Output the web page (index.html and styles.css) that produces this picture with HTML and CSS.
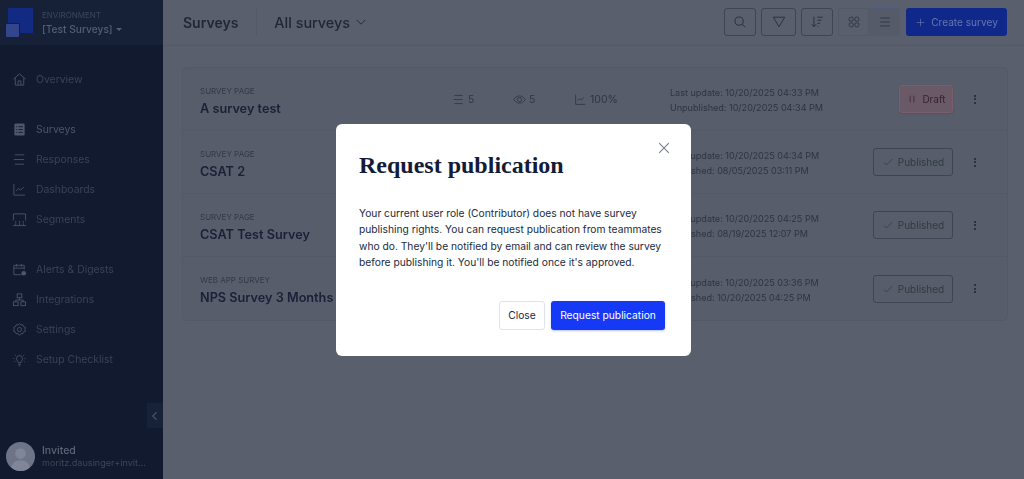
FILE: index.html
```html
<!DOCTYPE html>
<html lang="en">
<head>
  <meta charset="UTF-8">
  <title>Surveys</title>
  <link rel="stylesheet" href="styles.css">
</head>
<body>
  <aside class="sidebar">
    <div class="env">
      <div class="env-logo"><span class="logo-big"></span><span class="logo-small"></span></div>
      <div>
        <div class="env-label">ENVIRONMENT</div>
        <div class="env-name">[Test Surveys] <span class="caret"></span></div>
      </div>
    </div>
    <nav class="nav">
      <a class="nav-item nav-group">
        <svg viewBox="0 0 16 16"><path d="M1.500 7.500 8 2l6.500 5.500M3.500 6.500V14h9V6.500M6.500 14V9.500h3V14"/></svg>Overview
      </a>
      <a class="nav-item active">
        <svg viewBox="0 0 16 16"><rect class="solid" x="2.500" y="1.500" width="11" height="13" rx="1.500"/><path class="cut" d="M4.500 5h1M7 5h4.500M4.500 8h1M7 8h4.500M4.500 11h1M7 11h4.500"/></svg>Surveys
      </a>
      <a class="nav-item">
        <svg viewBox="0 0 16 16"><path d="M3 3h10M2 8h11M3 13h10"/></svg>Responses
      </a>
      <a class="nav-item">
        <svg viewBox="0 0 16 16"><path d="M2 2v12h12M4.500 9.500l2.500-2.500 2 1.500 3.500-3"/></svg>Dashboards
      </a>
      <a class="nav-item nav-group">
        <svg viewBox="0 0 16 16"><path d="M1.500 9V2h13v7M1 14.500h14"/><path class="thick" d="M3.500 10.500h1M7.500 10.500h1M11.500 10.500h1M3.500 13h1M7.500 13h1M11.500 13h1"/></svg>Segments
      </a>
      <a class="nav-item">
        <svg viewBox="0 0 16 16"><path d="M10 13.500H2V3.500h11V8M2 6.500h11M5 2v3M10 2v3"/><circle class="solid" cx="12.500" cy="12" r="2.500"/></svg>Alerts &amp; Digests
      </a>
      <a class="nav-item">
        <svg viewBox="0 0 16 16"><rect x="5.500" y="2" width="5" height="4"/><rect x="1.500" y="10.500" width="5" height="4"/><rect x="9.500" y="10.500" width="5" height="4"/><path d="M8 6v2.500M4 10.500v-2h8v2"/></svg>Integrations
      </a>
      <a class="nav-item">
        <svg viewBox="0 0 16 16"><path d="M8 1.800l1.500 1.400 2-.3.800 1.900 1.900.9-.4 2 .4 2.200-1.900.8-.8 1.900-2-.2L8 14.200l-1.500-1.800-2 .2-.8-1.900-1.900-.8.400-2.200-.4-2 1.900-.9.800-1.900 2 .3z"/><circle cx="8" cy="8" r="2.200"/></svg>Settings
      </a>
      <a class="nav-item">
        <svg viewBox="0 0 16 16"><path d="M6.500 11.500c0-1.800-1.700-2.300-1.700-4.500a3.200 3.200 0 0 1 6.400 0c0 2.200-1.700 2.700-1.700 4.500zM6.700 13.200h2.600M7.200 14.800h1.600M1.500 7h1.200M13.300 7h1.200M3 3l1 .8M13 3l-1 .8M2.500 10.500l1-.6M13.500 10.500l-1-.6"/></svg>Setup Checklist
      </a>
    </nav>
    <button type="button" class="collapse" aria-label="Collapse">
      <svg viewBox="0 0 16 16"><path d="M10 3 5 8l5 5"/></svg>
    </button>
    <div class="user">
      <div class="avatar">
        <svg viewBox="0 0 30 30"><circle cx="15" cy="12" r="5.500"/><path d="M5 30c0-8 4.500-11 10-11s10 3 10 11z"/></svg>
      </div>
      <div class="user-text">
        <div class="user-name">Invited</div>
        <div class="user-mail">moritz.dausinger+invit...</div>
      </div>
    </div>
  </aside>

  <main class="main">
    <header class="topbar">
      <div class="page-title">Surveys</div>
      <div class="topbar-sep"></div>
      <div class="page-filter">All surveys
        <svg viewBox="0 0 16 16"><path d="M3 5.500 8 10.500l5-5"/></svg>
      </div>
      <div class="tools">
        <button type="button" class="tool" aria-label="Search">
          <svg viewBox="0 0 16 16"><circle cx="7" cy="7" r="4.700"/><path d="m10.500 10.500 3.500 3.500"/></svg>
        </button>
        <button type="button" class="tool tool-filter" aria-label="Filter">
          <svg viewBox="0 0 16 16"><path d="M1.500 2.500h13L8 13.500z"/></svg>
        </button>
        <button type="button" class="tool" aria-label="Sort">
          <svg viewBox="0 0 16 16"><path d="M4.500 2v11M2 10.500 4.500 13.500 7 10.500M8.500 2.500h6M8.500 6h4.500M8.500 9.500h3M8.500 13h1"/></svg>
        </button>
        <div class="toggle">
          <button type="button" class="toggle-btn" aria-label="Grid">
            <svg viewBox="0 0 16 16"><rect x="2.500" y="2.500" width="4.500" height="4.500" rx="1.500"/><rect x="9" y="2.500" width="4.500" height="4.500" rx="1.500"/><rect x="2.500" y="9" width="4.500" height="4.500" rx="1.500"/><rect x="9" y="9" width="4.500" height="4.500" rx="1.500"/></svg>
          </button>
          <button type="button" class="toggle-btn on" aria-label="List">
            <svg viewBox="0 0 16 16"><path d="M2.500 3.500h11M2.500 8h11M2.500 12.500h11"/></svg>
          </button>
        </div>
        <button type="button" class="create">
          <svg viewBox="0 0 16 16"><path d="M8 2.500v11M2.500 8h11"/></svg>Create survey
        </button>
      </div>
    </header>

    <section class="list">
      <div class="row">
        <div class="row-title"><div class="kind">SURVEY PAGE</div><div class="name">A survey test</div></div>
        <div class="stat"><svg viewBox="0 0 16 16"><path d="M3 3h10M2 8h11M3 13h10"/></svg>5</div>
        <div class="stat"><svg viewBox="0 0 16 16"><path d="M1 8s2.500-4.500 7-4.500S15 8 15 8s-2.500 4.500-7 4.500S1 8 1 8z"/><circle cx="8" cy="8" r="2.500"/></svg>5</div>
        <div class="stat"><svg viewBox="0 0 16 16"><path d="M2 2v12h12M4.500 9.500l2.500-2.500 2 1.500 3.500-3"/></svg>100%</div>
        <div class="dates"><div>Last update: 10/20/2025 04:33 PM</div><div>Unpublished: 10/20/2025 04:34 PM</div></div>
        <div class="status draft"><svg viewBox="0 0 16 16"><path d="M5.500 3.500v9M10.500 3.500v9"/></svg>Draft</div>
        <div class="kebab"><span></span><span></span><span></span></div>
      </div>
      <div class="row">
        <div class="row-title"><div class="kind">SURVEY PAGE</div><div class="name">CSAT 2</div></div>
        <div class="stat"></div><div class="stat"></div><div class="stat"></div>
        <div class="dates"><div>Last update: 10/20/2025 04:34 PM</div><div>Published: 08/05/2025 03:11 PM</div></div>
        <div class="status"><svg viewBox="0 0 16 16"><path d="M2.500 8.500 6 12l7.500-8"/></svg>Published</div>
        <div class="kebab"><span></span><span></span><span></span></div>
      </div>
      <div class="row">
        <div class="row-title"><div class="kind">SURVEY PAGE</div><div class="name">CSAT Test Survey</div></div>
        <div class="stat"></div><div class="stat"></div><div class="stat"></div>
        <div class="dates"><div>Last update: 10/20/2025 04:25 PM</div><div>Published: 08/19/2025 12:07 PM</div></div>
        <div class="status"><svg viewBox="0 0 16 16"><path d="M2.500 8.500 6 12l7.500-8"/></svg>Published</div>
        <div class="kebab"><span></span><span></span><span></span></div>
      </div>
      <div class="row">
        <div class="row-title"><div class="kind">WEB APP SURVEY</div><div class="name">NPS Survey 3 Months</div></div>
        <div class="stat"></div><div class="stat"></div><div class="stat"></div>
        <div class="dates"><div>Last update: 10/20/2025 03:36 PM</div><div>Published: 10/20/2025 04:25 PM</div></div>
        <div class="status"><svg viewBox="0 0 16 16"><path d="M2.500 8.500 6 12l7.500-8"/></svg>Published</div>
        <div class="kebab"><span></span><span></span><span></span></div>
      </div>
    </section>
  </main>

  <div class="modal-wrap">
    <div class="modal" role="dialog" aria-labelledby="modal-title">
      <button type="button" class="modal-x" aria-label="Close">
        <svg viewBox="0 0 16 16"><path d="M2.500 2.500l11 11M13.500 2.500l-11 11"/></svg>
      </button>
      <h2 id="modal-title">Request publication</h2>
      <p>Your current user role (Contributor) does not have survey publishing rights. You can request publication from teammates who do. They'll be notified by email and can review the survey before publishing it. You'll be notified once it's approved.</p>
      <div class="modal-actions">
        <button type="button" class="btn-close">Close</button>
        <button type="button" class="btn-primary">Request publication</button>
      </div>
    </div>
  </div>
</body>
</html>
```

FILE: styles.css
```css
* {
  box-sizing: border-box;
}
html, body {
  height: 100%;
}
body {
  margin: 0;
  display: flex;
  overflow: hidden;
  font-family: Inter, "Liberation Sans", sans-serif;
  background: #595f6c;
  color: #1d2439;
}
svg {
  fill: none;
  stroke: currentColor;
  stroke-width: 1;
  flex: none;
}
button {
  font-family: inherit;
  padding: 0;
}

.sidebar {
  width: 163px;
  flex: none;
  height: 100%;
  background: #111a2e;
  display: flex;
  flex-direction: column;
  position: relative;
  color: #3f4659;
  filter: blur(0.4px);
}
.env {
  height: 45px;
  background: #162138;
  display: flex;
  align-items: center;
  padding-left: 6px;
  gap: 7px;
  flex: none;
}
.env-logo {
  width: 29px;
  height: 29px;
  position: relative;
  flex: none;
}
.logo-big {
  position: absolute;
  right: 2px;
  top: 0;
  width: 25px;
  height: 25px;
  background: #122a82;
}
.logo-small {
  position: absolute;
  left: 0;
  bottom: 0;
  width: 13px;
  height: 13px;
  background: #33468c;
  border-radius: 1px;
  box-shadow: 0 0 0 1px #151f3a;
}
.env-label {
  font-size: 8px;
  line-height: 11px;
  color: #3d4559;
}
.env-name {
  font-size: 10.200px;
  line-height: 14px;
  font-weight: 500;
  color: #565d70;
  margin-top: 1px;
  white-space: nowrap;
}
.caret {
  display: inline-block;
  vertical-align: middle;
  margin-left: 1px;
  border: 3px solid transparent;
  border-top: 3px solid #565d70;
  border-bottom: 0;
}
.nav {
  display: flex;
  flex-direction: column;
  padding-top: 19px;
}
.nav-item {
  height: 30px;
  display: flex;
  align-items: center;
  font-size: 10.400px;
  padding-left: 12px;
  gap: 9px;
  color: #3b4256;
  flex: none;
}
.nav-item svg {
  width: 15px;
  height: 15px;
  color: #4b5265;
}
.nav-group {
  margin-bottom: 20px;
}
.nav-item.active {
  color: #4f5669;
}
.solid {
  fill: #4f5669;
  stroke: none;
}
.cut {
  stroke: #111a2e;
}
.thick {
  stroke-width: 2;
}
.collapse {
  position: absolute;
  right: 0;
  top: 403px;
  width: 16px;
  height: 25px;
  border: 0;
  background: #172239;
  color: #4b5265;
  display: flex;
  align-items: center;
  justify-content: center;
}
.collapse svg {
  width: 12px;
  height: 12px;
  stroke-width: 1.500;
}
.user {
  margin-top: auto;
  height: 44px;
  padding: 0 0 8px 6px;
  display: flex;
  align-items: flex-end;
  gap: 7px;
}
.avatar {
  width: 29px;
  height: 29px;
  border-radius: 50%;
  background: #6d7488;
  overflow: hidden;
  flex: none;
}
.avatar svg {
  width: 29px;
  height: 29px;
  fill: #7f8698;
  stroke: none;
  display: block;
}
.user-text {
  padding-bottom: 2px;
}
.user-name {
  font-size: 10.500px;
  line-height: 13px;
  font-weight: 500;
  color: #5d6477;
}
.user-mail {
  font-size: 9.100px;
  line-height: 12px;
  color: #3f4657;
  white-space: nowrap;
}

/* main column */
.main {
  flex: 1;
  min-width: 0;
  filter: blur(0.4px);
}
.topbar {
  height: 46px;
  display: flex;
  align-items: center;
  padding: 0 17px 1px 20px;
  border-bottom: 1px solid #535966;
}
.page-title {
  font-size: 14px;
  font-weight: 600;
  color: #1f2638;
}
.topbar-sep {
  width: 1px;
  height: 28px;
  background: #535966;
  margin: 0 17px 0 18px;
}
.page-filter {
  display: flex;
  align-items: center;
  gap: 4px;
  font-size: 14.400px;
  font-weight: 500;
  color: #1f2638;
}
.page-filter svg {
  width: 14px;
  height: 14px;
}
.tools {
  margin-left: auto;
  display: flex;
  align-items: center;
  gap: 5px;
}
.tool {
  width: 32px;
  height: 28px;
  background: transparent;
  border: 1px solid #3f4553;
  border-radius: 3px;
  color: #262c3c;
  display: flex;
  align-items: center;
  justify-content: center;
}
.tool svg {
  width: 14px;
  height: 14px;
}
.tool-filter {
  width: 35px;
}
.toggle {
  display: flex;
  height: 28px;
}
.toggle-btn {
  width: 31px;
  background: transparent;
  border: 1px solid #535966;
  border-radius: 3px 0 0 3px;
  color: #2c3344;
  display: flex;
  align-items: center;
  justify-content: center;
}
.toggle-btn.on {
  background: #555b69;
  border-color: #4f5c7c;
  border-radius: 0 3px 3px 0;
}
.toggle-btn svg {
  width: 14px;
  height: 14px;
}
.create {
  width: 101px;
  height: 28px;
  margin-left: 1px;
  background: #10288a;
  color: #6775b0;
  border: 0;
  border-radius: 3px;
  font-size: 10.100px;
  display: flex;
  align-items: center;
  justify-content: center;
  gap: 5px;
}
.create svg {
  width: 11px;
  height: 11px;
}

/* survey list */
.list {
  margin: 22px 17px 0 20px;
  height: 252px;
  background: #575d6a;
  border-radius: 4px;
  box-shadow: 0 0 0 1px #535966;
}
.row {
  height: 63px;
  display: flex;
  align-items: center;
  padding: 0 14px 0 17px;
  border-bottom: 1px solid #535966;
}
.row:last-child {
  border-bottom: 0;
}
.row-title {
  width: 252px;
  flex: none;
  padding-top: 4px;
}
.kind {
  font-size: 8px;
  line-height: 12px;
  margin-bottom: 3px;
  color: #323949;
}
.name {
  font-size: 12.700px;
  line-height: 18px;
  font-weight: 600;
  color: #1a2136;
}
.stat {
  width: 61px;
  flex: none;
  display: flex;
  align-items: center;
  gap: 3px;
  font-size: 10.500px;
  color: #2e3545;
}
.stat svg {
  width: 13px;
  height: 13px;
}
.stat:nth-child(4) {
  width: 96px;
}
.dates {
  font-size: 9.050px;
  line-height: 15px;
  padding-top: 2px;
  color: #2d3444;
  white-space: nowrap;
}
.status {
  margin-left: auto;
  height: 28px;
  width: 80px;
  border: 1px solid #3d4452;
  border-radius: 3px;
  display: flex;
  align-items: center;
  justify-content: center;
  gap: 4px;
  font-size: 10px;
  color: #2f3c3e;
}
.status svg {
  width: 12px;
  height: 12px;
}
.status.draft {
  width: 54px;
  background: #6a5a68;
  border-color: #7a5e6c;
  color: #3a2230;
  box-shadow: 0 1px 2px rgba(0, 0, 0, 0.1);
}
.kebab {
  width: 3px;
  margin: 0 16px 0 21px;
  display: flex;
  flex-direction: column;
  gap: 1.500px;
  flex: none;
}
.kebab span {
  width: 2px;
  height: 2px;
  border-radius: 50%;
  background: #1d2439;
}

/* modal */
.modal-wrap {
  position: fixed;
  inset: 0;
  padding-left: 3px;
  display: flex;
  align-items: center;
  justify-content: center;
}
.modal {
  width: 355px;
  height: 232px;
  background: #fff;
  border-radius: 6px;
  padding: 25px 23px 26px;
  position: relative;
  display: flex;
  flex-direction: column;
}
.modal-x {
  position: absolute;
  right: 20px;
  top: 17px;
  width: 14px;
  height: 14px;
  border: 0;
  background: none;
  color: #767d8a;
}
.modal-x svg {
  width: 14px;
  height: 14px;
  display: block;
  stroke-width: 1.200;
}
.modal h2 {
  margin: 0;
  font-family: "Liberation Serif", serif;
  font-size: 24px;
  line-height: 32px;
  font-weight: 700;
  color: #131b38;
}
.modal p {
  margin: 24.500px 0 0;
  font-size: 10.250px;
  line-height: 16.300px;
  color: #222a3e;
}
.modal-actions {
  margin-top: auto;
  margin-right: 3px;
  display: flex;
  justify-content: flex-end;
  gap: 6px;
}
.btn-close {
  width: 46px;
  height: 29px;
  background: #fff;
  border: 1px solid #dfe3ea;
  border-radius: 3px;
  font-size: 10.250px;
  color: #222a3e;
}
.btn-primary {
  width: 114px;
  height: 29px;
  background: #1539f5;
  border: 0;
  border-radius: 3px;
  font-size: 10.250px;
  color: #fff;
  box-shadow: 0 1px 2px rgba(21, 57, 245, 0.3);
}
```
